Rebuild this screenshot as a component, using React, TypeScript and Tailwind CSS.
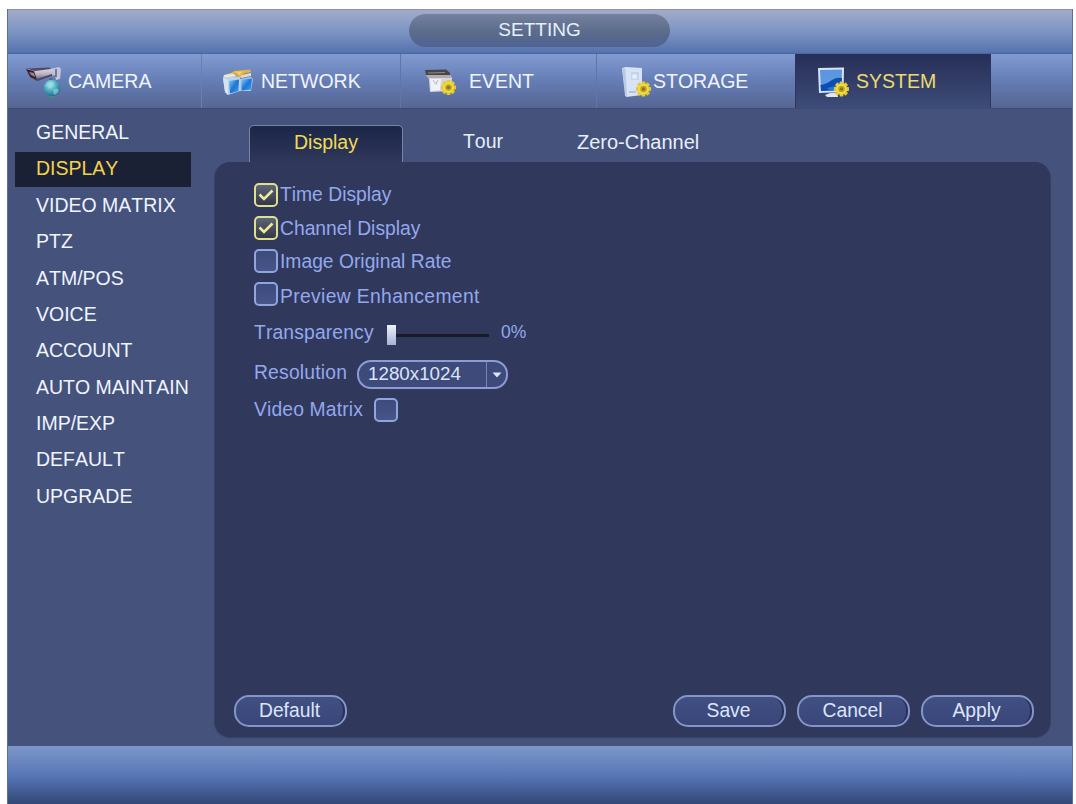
import { useState, type ReactNode } from 'react';
import clsx from 'clsx';

function Gear({ x, y }: { x: number; y: number }) {
  return (
    <g transform={`translate(${x} ${y})`}>
      {[0, 45, 90, 135].map(angle => (
        <rect key={angle} x="-1.9" y="-7.6" width="3.8" height="15.2" rx="0.8" fill="#e3c935" transform={`rotate(${angle})`} />
      ))}
      <circle r="5.4" fill="#f2dc3c" />
      <circle r="3.3" fill="#c9a51c" />
      <circle r="1.8" fill="#7e7a3c" />
    </g>
  );
}

function CameraIcon() {
  return (
    <svg width="37" height="34" viewBox="0 0 37 34">
      <defs>
        <linearGradient id="camBody" x1="0" y1="0" x2="0" y2="1">
          <stop offset="0" stopColor="#e2dfe8" />
          <stop offset="0.5" stopColor="#b4afc4" />
          <stop offset="1" stopColor="#4d4660" />
        </linearGradient>
        <radialGradient id="camGlobe" cx="0.4" cy="0.3" r="0.75">
          <stop offset="0" stopColor="#b4edf2" />
          <stop offset="0.5" stopColor="#4cabc0" />
          <stop offset="1" stopColor="#1c6180" />
        </radialGradient>
      </defs>
      <path d="M25 3 L34 1 L36 3 L35 13 L31 14 L30 9 L25 10 Z" fill="#c3c7dc" />
      <path d="M31 3 v8" stroke="#5c5f7b" strokeWidth="1.5" />
      <path d="M2 3 L24 2 L29 6 L27 10 L12 15 L5 12 Z" fill="url(#camBody)" />
      <path d="M1 3 L9 5 L12 14 L5 11 Z" fill="#2e2233" />
      <path d="M4 6 L9 7 L10 11 L6 9 Z" fill="#9d7f92" />
      <path d="M1 2.500 L24 1.500 L26 3 L10 5 Z" fill="#54485f" />
      <path d="M12 13 L27 8 L27 10 L12 15 Z" fill="#4d4660" />
      <path d="M26 12 v4" stroke="#52637f" strokeWidth="3" />
      <circle cx="27" cy="22" r="8.3" fill="url(#camGlobe)" />
      <path d="M21 19 q4 -5 8 -2 q-1 5 -5 5 z M28 24 q4 -3 6 0 q-1 4 -5 5 z" fill="#91dde0" opacity="0.6" />
      <path d="M23 30 l5 3 2 -3 z" fill="#4b8a75" />
    </svg>
  );
}

function NetworkIcon() {
  return (
    <svg width="32" height="27" viewBox="0 0 32 27">
      <defs>
        <linearGradient id="netScreen" x1="0" y1="0" x2="1" y2="1">
          <stop offset="0" stopColor="#8dccf8" />
          <stop offset="0.5" stopColor="#1c76d6" />
          <stop offset="1" stopColor="#3fa2ed" />
        </linearGradient>
      </defs>
      <path d="M17 10 L28 8 L30 10 L28 22 L17 22 Z" fill="#a9cbec" />
      <path d="M18.500 10.500 L29 9.500 L28 20.500 L18.500 21.500 Z" fill="url(#netScreen)" />
      <path d="M0 9 L5 6 L17 8 L17 22 L5 26 L2 23 Z" fill="#b9d2ea" />
      <path d="M6 12 L16 10.500 L15.500 22 L7 24.500 Z" fill="url(#netScreen)" />
      <path d="M0 9 L5 11 L5 26 L2 23 Z" fill="#d5e4f3" />
      <path d="M1 6 L9 4 L14 6.500 L7 8 L0 8.500 Z" fill="#ece4cd" />
      <path d="M16 6.500 L28 4 L28 7 L18 9 Z" fill="#e3dcc8" />
      <path d="M11 2 L27 0.500 L28 3 L21 4.500 L16 8.500 L13 5 L7 4.500 Z" fill="#e8b23c" />
      <path d="M12 2.500 L20 2.500 L16.500 6 Z" fill="#f8d065" />
    </svg>
  );
}

function EventIcon() {
  return (
    <svg width="32" height="27" viewBox="0 0 32 27">
      <path d="M0 1 L21 0.500 L25 4 L25 8 L1 6 Z" fill="#46454a" />
      <path d="M3 4 L20 3.500" stroke="#8f8a86" strokeWidth="1.2" />
      <path d="M1 6 L25 6 L27 9 L26 22 L5 23 L4 10 Z" fill="#d5d6dc" />
      <path d="M1 6 L25 6 L26 9 L3 9 Z" fill="#b1abaa" />
      <path d="M5 10 L16 10 L15 21 L6 22 Z" fill="#f1f2f7" />
      <path d="M8 11 l3 4 2 -4" fill="none" stroke="#c0c2d0" strokeWidth="1.2" />
      <Gear x={23.5} y={18.5} />
    </svg>
  );
}

function StorageIcon() {
  return (
    <svg width="30" height="31" viewBox="0 0 30 31">
      <path d="M0 1 L4 0 L20 1 L20 28 L4 30 Z" fill="#d8e4f5" />
      <path d="M0 1 L3.500 2 L5 29 L3 29 Z" fill="#bccbe4" />
      <path d="M9 5 h8 v8 h-8 z" fill="#c6d4ea" />
      <circle cx="12.500" cy="9.500" r="2.5" fill="#e5edf8" />
      <path d="M7 25 h7" stroke="#a9b6cf" strokeWidth="1.5" />
      <Gear x={21.500} y={22} />
    </svg>
  );
}

function SystemIcon() {
  return (
    <svg width="31" height="31" viewBox="0 0 31 31">
      <defs>
        <linearGradient id="sysScreen" x1="0" y1="0" x2="0.3" y2="1">
          <stop offset="0" stopColor="#5d94de" />
          <stop offset="1" stopColor="#5b9ce6" />
        </linearGradient>
      </defs>
      <path d="M0 1 L26 0.500 L25.500 25 L1 26 Z" fill="#d9e5f6" />
      <path d="M2 3 L24 2.500 L23.500 23 L3 24 Z" fill="url(#sysScreen)" />
      <path d="M2.500 18 Q9 17 14 13 Q19 10 24 11 L23.500 23 L3 24 Z" fill="#0c4db4" />
      <path d="M9 21 Q17 20 24 16 L23.500 23 L12 23.500 Z" fill="#2a75cc" />
      <path d="M7 28 Q13 25 19 26 L20 30 L9 30 Z" fill="#e3e7ef" />
      <Gear x={23.500} y={22} />
    </svg>
  );
}

const sidebarItems = [
  'GENERAL',
  'DISPLAY',
  'VIDEO MATRIX',
  'PTZ',
  'ATM/POS',
  'VOICE',
  'ACCOUNT',
  'AUTO MAINTAIN',
  'IMP/EXP',
  'DEFAULT',
  'UPGRADE',
];

interface NavTabProps {
  label: string;
  icon: ReactNode;
  className: string;
  active?: boolean;
}

function NavTab({ label, icon, className, active }: NavTabProps) {
  return (
    <button
      className={clsx(
        'flex items-center h-full shrink-0 pt-px',
        active
          ? 'bg-linear-to-b from-[#272f57] to-[#3d4c78] text-[#ecdc6c] border-x border-[#2b3560]'
          : 'text-[#f0f4fc]',
        className
      )}
    >
      <span className="mt-0.5">{icon}</span>
      <span>{label}</span>
    </button>
  );
}

interface CheckBoxProps {
  checked: boolean;
  onChange: () => void;
}

function CheckBox({ checked, onChange }: CheckBoxProps) {
  return (
    <button
      onClick={onChange}
      className={clsx(
        'flex items-center justify-center w-6 h-6 shrink-0 rounded-[5px] border-2',
        checked
          ? 'border-[#dfe08c] bg-linear-to-b from-[#5e6578] to-[#333748]'
          : 'border-[#8ea5df] bg-linear-to-b from-[#3c4a7c] to-[#475588]'
      )}
    >
      {checked && (
        <svg width="18" height="16" viewBox="0 0 18 16">
          <path d="M2.500 7.500 L7 12 L15.500 3.500" fill="none" stroke="#eeeb9c" strokeWidth="2.6" />
        </svg>
      )}
    </button>
  );
}

function PillButton({ label }: { label: string }) {
  return (
    <button className="h-8 w-[113px] shrink-0 rounded-[15px] border-2 border-[#8495c8] bg-linear-to-b from-[#414f82] to-[#3a4679] text-[19.3px] leading-none pb-px pr-0.5 text-[#dbe5fb] shadow-[inset_-3px_0_0_-1px_#27305a]">
      {label}
    </button>
  );
}

export default function App() {
  const [section, setSection] = useState('DISPLAY');
  const [options, setOptions] = useState([
    { label: 'Time Display', checked: true, row: 'h-[33px]', text: 'pt-px' },
    { label: 'Channel Display', checked: true, row: 'h-[33px]', text: 'pt-0.5' },
    { label: 'Image Original Rate', checked: false, row: 'h-[33px]', text: 'pt-0.5' },
    { label: 'Preview Enhancement', checked: false, row: 'h-[34px]', text: 'pt-[5px] tracking-[0.36px]' },
  ]);
  const [matrix, setMatrix] = useState(false);

  const toggleOption = (index: number) => {
    setOptions(options.map((o, i) => (i === index ? { ...o, checked: !o.checked } : o)));
  };

  return (
    <div className="w-[1076px] h-[804px] overflow-hidden bg-white pt-[9px] pl-[7px] pr-[3px] font-['Liberation_Sans',Arial,sans-serif] text-[19.5px] leading-none whitespace-nowrap [font-kerning:none]">
      <div className="flex flex-col h-[795px] bg-[#44527c] border-x border-[#5f6c94]">
        {/* Title bar */}
        <div className="flex h-11 shrink-0 pt-1 pl-[401px] border-t border-[#8c93a8] bg-linear-to-b from-[#a1abc9] via-[#7d95c3] to-[#5672ad]">
          <div className="flex items-center justify-center w-[261px] h-[33px] rounded-full bg-linear-to-b from-[#75819e] via-[#5d6d8c] to-[#506291] text-[19px] text-[#e6effb] pb-0.5">
            SETTING
          </div>
        </div>

        {/* Main navigation */}
        <div className="flex h-14 shrink-0 border-t border-b border-t-[#4d659f] border-b-[#3c4a75] bg-linear-to-b from-[#819bd3] via-[#657db4] to-[#566594]">
          <NavTab label="CAMERA" icon={<CameraIcon />} className="w-[194px] pl-[17px] gap-[6px] border-r border-[#6a80b5]" />
          <NavTab label="NETWORK" icon={<NetworkIcon />} className="w-[199px] pl-[21px] gap-1.5 border-r border-[#5f76ac]" />
          <NavTab label="EVENT" icon={<EventIcon />} className="w-[196px] pl-6 gap-3 border-r border-[#5f76ac]" />
          <NavTab label="STORAGE" icon={<StorageIcon />} className="w-[198px] pl-[25px] gap-px" />
          <NavTab label="SYSTEM" icon={<SystemIcon />} className="w-[196px] pl-[22px] gap-[7px]" active />
        </div>

        <div className="flex flex-1 min-h-0">
          {/* Sidebar */}
          <div className="w-[206px] shrink-0 pt-1.5 pl-[7px]">
            {sidebarItems.map(item => (
              <div key={item} className="h-[36.4px] flex items-center">
                <button
                  onClick={() => setSection(item)}
                  className={clsx(
                    'flex items-center w-[176px] h-[35px] pl-[21px] pb-px text-left',
                    section === item ? 'bg-[#1a2135] text-[#f3d34b]' : 'text-[#eff4fd]'
                  )}
                >
                  {item}
                </button>
              </div>
            ))}
          </div>

          <div className="flex flex-col flex-1 pr-[21px] pb-2">
            {/* Sub tabs */}
            <div className="flex h-[53px] shrink-0 pt-4 pl-[35px]">
              <button className="w-[154px] h-[38px] rounded-t-[5px] border border-b-0 border-[#7484ac] bg-linear-to-b from-[#1b2546] to-[#30385c] text-[#f0db55] pb-[3px]">
                Display
              </button>
              <button className="w-[160px] text-[#e8eefb] pb-[3px] text-[19.5px]">Tour</button>
              <button className="pl-[14px] text-[#e8eefb] pb-[3px] text-[20px]">Zero-Channel</button>
            </div>

            {/* Settings panel */}
            <div className="flex flex-col flex-1 rounded-[16px] bg-[#30385c] border border-[#364067] border-t-[#30385c] pt-[15px] pl-[39px] pr-4 pb-2.5 text-[19.3px] text-[#94a8ed]">
              {options.map((option, i) => (
                <div key={option.label} className={clsx('flex items-center', option.row)}>
                  <CheckBox checked={option.checked} onChange={() => toggleOption(i)} />
                  <span className={clsx('pl-0.5', option.text)}>{option.label}</span>
                </div>
              ))}

              <div className="flex items-center h-[42px]">
                <span className="w-[133px] pt-0.5 tracking-[0.15px]">Transparency</span>
                <div className="w-[9px] h-5 mt-1.5 bg-linear-to-b from-[#eef1fc] to-[#a7b1d5]" />
                <div className="w-[93px] h-[3px] mt-1.5 bg-[#181b27]" />
                <span className="pl-[12px] pt-0.5 text-[17.5px]">0%</span>
              </div>

              <div className="flex items-center h-[39px]">
                <span className="w-[103px] tracking-[0.2px]">Resolution</span>
                <button className="flex items-center w-[151px] h-[29px] mt-1 rounded-[14px] border-2 border-[#8c9dd1] bg-[#3e4a79] text-[18.8px] text-[#dbe5fb]">
                  <span className="flex-1 pl-[9px] text-left">1280x1024</span>
                  <span className="flex items-center justify-center w-5 h-full border-l border-[#7486bb]">
                    <svg width="10" height="6" viewBox="0 0 10 6">
                      <path d="M0.500 0.500 H9.500 L5 5.500 Z" fill="#dbe5fb" />
                    </svg>
                  </span>
                </button>
              </div>

              <div className="flex items-center h-[35px]">
                <span className="w-[120px] pt-px tracking-[0.15px]">Video Matrix</span>
                <CheckBox checked={matrix} onChange={() => setMatrix(!matrix)} />
              </div>

              <div className="flex mt-auto -ml-5">
                <PillButton label="Default" />
                <div className="flex ml-auto gap-[11px]">
                  <PillButton label="Save" />
                  <PillButton label="Cancel" />
                  <PillButton label="Apply" />
                </div>
              </div>
            </div>
          </div>
        </div>

        {/* Status bar */}
        <div className="h-[58px] shrink-0 bg-linear-to-b from-[#7d97c9] via-[#5977b8] to-[#314777]" />
      </div>
    </div>
  );
}
